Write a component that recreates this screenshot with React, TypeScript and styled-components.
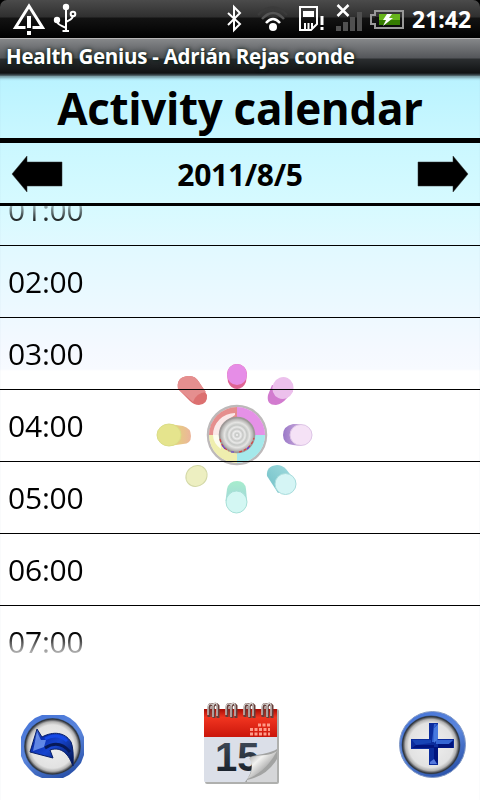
import React from "react";
import styled, { createGlobalStyle } from "styled-components";

const GlobalStyle = createGlobalStyle`
  * { box-sizing: border-box; }
  body { margin: 0; background: #000; font-family: "Open Sans", "Noto Sans", sans-serif; }
`;

const Screen = styled.div`
  width: 480px;
  height: 800px;
  display: flex;
  flex-direction: column;
  overflow: hidden;
  background: #000;
`;

const StatusBar = styled.div`
  height: 38px;
  display: flex;
  align-items: center;
  background: linear-gradient(#4b4b4b 0, #2f2f2f 17px, #131313 18px, #000 100%);
  border-radius: 7px 7px 0 0;
`;

const Clock = styled.span`
  margin-left: auto;
  width: 68px;
  font-size: 23px;
  line-height: 38px;
  font-weight: 700;
  letter-spacing: 0;
  color: #fff;
  white-space: nowrap;
`;

const TitleBar = styled.div`
  height: 38px;
  padding-left: 6px;
  border-top: 1px solid #b5b5b5;
  background: linear-gradient(#858789 0, #54565a 19px, #2b2e30 20px, #101213 34px, #3b4a50 36px, #60777d 37px);
  color: #fff;
  font-size: 20.5px;
  line-height: 34px;
  font-weight: 700;
  letter-spacing: -0.25px;
  white-space: nowrap;
  text-shadow: 0 0 5px #14241f, 1px 1px 3px #14241f;
`;

const Content = styled.main`
  position: relative;
  z-index: 0;
  flex: 1;
  display: flex;
  flex-direction: column;
  background: linear-gradient(#b9f3ff 0, #c9f7ff 60px, #d6faff 128px, #e2f9ff 175px, #ecf9ff 230px, #f5f9ff 275px, #f7faff 293px, #fff 295px);
  box-shadow: inset 0 4px 3px -2px #71929b;
`;

const Heading = styled.h1`
  margin: 0;
  height: 67px;
  border-bottom: 5px solid #000;
  font-size: 44px;
  line-height: 65px;
  letter-spacing: -0.35px;
  font-weight: 700;
  text-align: center;
  white-space: nowrap;
`;

const DateBar = styled.div`
  height: 63px;
  padding: 2px 11px 0;
  display: flex;
  align-items: center;
  justify-content: space-between;
  border-bottom: 3px solid #000;
`;

const DateText = styled.span`
  padding-top: 2px;
  font-size: 30px;
  line-height: 58px;
  letter-spacing: -0.3px;
  font-weight: 700;
`;

const HourList = styled.div`
  height: 455px;
  overflow: hidden;
  display: flex;
  flex-direction: column;
  justify-content: flex-start;
  mask-image: linear-gradient(transparent -8px, #000 18px, #000 427px, transparent 455px);
`;

const Hour = styled.div<{ $clipped?: boolean }>`
  flex: none;
  height: 72px;
  margin-top: ${(p) => (p.$clipped ? "-32px" : "0")};
  padding-left: 8px;
  border-bottom: 1px solid #000;
  font-size: 30px;
  line-height: 71px;
  letter-spacing: -0.2px;
  color: #000;
`;

const Footer = styled.footer`
  flex: 1;
  padding: 39px 13px 0 21px;
  display: flex;
  justify-content: space-between;
  align-items: flex-start;
`;

const RoundButton = styled.div<{ $drop: number }>`
  display: flex;
  padding-top: ${(p) => p.$drop}px;
`;

const Emblem = styled.svg`
  position: absolute;
  z-index: -1;
  left: 145px;
  top: 279px;
`;

const StatusIcons = () => (
  <svg width="406" height="38" viewBox="0 0 406 38" fill="none" stroke="#fff">
    <path d="M25.500 27.500H15.500L29 6L42.500 27.500H32.500" strokeWidth="3" />
    <path d="M29 16V28M29 31V35" strokeWidth="4" />
    <g strokeWidth="2">
      <path d="M66 7V31M57 20C57 25 61 25 66 28M73 15C73 20 69 20 66 22" />
      <circle cx="73" cy="14" r="2.300" />
      <path d="M62.500 31H69" />
    </g>
    <circle cx="66" cy="7" r="3.200" fill="#fff" stroke="none" />
    <circle cx="57" cy="20" r="3.200" fill="#fff" stroke="none" />
    <path d="M228 13L240 24L234 30V7L240 13L228 25" strokeWidth="2" />
    <path d="M258 15Q273 0 287 15" stroke="#3b3b3b" strokeWidth="2.500" />
    <path d="M262 19Q273 7 284 19" stroke="#555" strokeWidth="2.500" />
    <path d="M266 23Q273 15 280 23" strokeWidth="2.500" />
    <circle cx="273" cy="27" r="4" fill="#fff" stroke="none" />
    <path d="M300 7H317V24L311 30H300Z" strokeWidth="2" />
    <path d="M303 11H314V17H303Z" fill="#fff" stroke="none" />
    <path d="M305 23V29M308.500 23V29M312 23V28" strokeWidth="2" />
    <path d="M322 16V25M322 27V30" strokeWidth="3" />
    <path d="M337.500 5L348.500 16M348.500 5L337.500 16" strokeWidth="2.500" />
    <path d="M336 26H341V31H336ZM343 22H348V31H343ZM350 17H355V31H350ZM357 12H362V31H357Z" fill="#505050" stroke="none" />
    <path d="M375 11H403V28H375V24H371V15H375Z" stroke="#999" strokeWidth="2" />
    <path d="M379 14H400V25H379V22H375V17H379Z" fill="#67b51b" stroke="none" />
    <path d="M379 20H400V25H379Z" fill="#347c00" stroke="none" />
    <path d="M375 17H379V22H375Z" fill="#111" stroke="none" />
    <path d="M387 14H392L389 18H393L383 26L386 20H383Z" fill="#fff" stroke="none" />
  </svg>
);

const Arrow = ({ right }: { right?: boolean }) => (
  <svg width="52" height="36" viewBox="0 0 52 36">
    <g transform={right ? "translate(52 0) scale(-1 1)" : undefined}>
      <path d="M1 18L16 0V6H51V30H16V36Z" fill="#000" stroke="#333" strokeWidth=".5" />
    </g>
  </svg>
);

const PegEmblem = () => (
  <Emblem width="180" height="170" viewBox="0 0 180 170">
    <defs>
      <linearGradient id="mint" x1="0" y1="0" x2="0" y2="1">
        <stop stopColor="#a7edcd" /><stop offset="1" stopColor="#a2d7d8" />
      </linearGradient>
      <linearGradient id="gold"><stop stopColor="#e2dc72" /><stop offset="1" stopColor="#ecb59b" /></linearGradient>
      <linearGradient id="violet"><stop stopColor="#9a79c8" /><stop offset="1" stopColor="#cbaadb" /></linearGradient>
      <linearGradient id="aqua" x1="0" y1="1" x2="1" y2="0"><stop stopColor="#6fbfc6" /><stop offset="1" stopColor="#a4dde0" /></linearGradient>
      <radialGradient id="steel">
        <stop stopColor="#fff" /><stop offset=".1" stopColor="#c5c7c5" />
        <stop offset=".22" stopColor="#eeeeee" /><stop offset=".34" stopColor="#c6c7c5" />
        <stop offset=".46" stopColor="#eaeae9" /><stop offset=".57" stopColor="#c4c6c4" />
        <stop offset=".72" stopColor="#e5e5e3" /><stop offset="1" stopColor="#a09d9c" />
      </radialGradient>
    </defs>
    <path d="M82 19A10 10 0 0 1 102 19L101 27Q98 34 92 34T83 27Z" fill="#df6392" />
    <ellipse cx="92" cy="19.500" rx="10" ry="10.500" fill="#e68de7" />
    <path d="M33 34Q31 22 43 21Q50 20 54 27L62 40Q63 49 54 50Q49 50 45 46Z" fill="#dc7070" />
    <path d="M33 34Q31 22 43 21Q50 20 54 27L61 37Q51 38 48 47Z" fill="#e58f8f" />
    <path d="M127 30L123 40Q121 50 131 50Q137 49 142 43L148 36Z" fill="#d27bcf" />
    <ellipse cx="138" cy="33" rx="10.500" ry="11" transform="rotate(25 138 33)" fill="#ecc0ec" />
    <path d="M24 69L38 71Q46 73 46 81T38 89L24 91Z" fill="url(#gold)" />
    <ellipse cx="24" cy="80" rx="12" ry="11" fill="#e5e48d" stroke="#dadd87" />
    <path d="M156 69H148Q138 71 138 80T148 90L156 91Z" fill="url(#violet)" />
    <ellipse cx="156" cy="80" rx="11" ry="10.500" fill="#f5e2f6" stroke="#ddc5e6" />
    <path d="M122 121Q121 111 132 110Q137 110 141 114L151 127L133 138Z" fill="url(#aqua)" />
    <circle cx="140.500" cy="129" r="10.500" fill="#d5f5f5" stroke="#a8dcdc" />
    <path d="M80.500 146L82 134Q84 126 92 126T101 134L102 146Z" fill="url(#mint)" />
    <ellipse cx="91.500" cy="147" rx="10.500" ry="11" fill="#d3f7f3" stroke="#a6e0d7" />
    <ellipse cx="51.500" cy="121" rx="11" ry="10" transform="rotate(-40 51.500 121)" fill="#edefc1" stroke="#d3d8a7" />
    <circle cx="92" cy="80" r="29" fill="#fff" stroke="#bdb9ba" strokeWidth="2.500" />
    <path d="M92 80V52A28 28 0 0 0 64 80Z" fill="#e58e8d" />
    <path d="M92 80H120A28 28 0 0 0 92 52Z" fill="#e591e7" />
    <path d="M92 80V108A28 28 0 0 0 120 80Z" fill="#a5e9eb" />
    <path d="M92 80H64A28 28 0 0 0 92 108Z" fill="#efeeae" />
    <path d="M90 58A22 22 0 0 0 68 80Q68 88 76 94Q73 70 90 60Z" fill="#fff" opacity=".8" />
    <circle cx="92" cy="80" r="17.500" fill="url(#steel)" stroke="#9e9897" strokeWidth="1.500" />
    <path d="M75 84Q77 93 84 96M94 97Q106 94 109 83" fill="none" stroke="#d93d3d" strokeWidth="1.200" strokeDasharray="3 2" />
    <path d="M77 90L80 94M86 97H89M102 94L104 92" stroke="#6938d5" strokeWidth="1.200" />
  </Emblem>
);

const BlueDefs = ({ name }: { name: string }) => (
  <defs>
    <linearGradient id={name} x1=".2" y1="0" x2=".7" y2="1">
      <stop stopColor="#4775d8" /><stop offset=".5" stopColor="#5b86dc" /><stop offset="1" stopColor="#2850a8" />
    </linearGradient>
    <radialGradient id={name + "face"}>
      <stop stopColor="#efefef" /><stop offset=".76" stopColor="#e2e2e2" />
      <stop offset=".87" stopColor="#b2b2b2" /><stop offset=".96" stopColor="#30343c" /><stop offset="1" stopColor="#34527f" />
    </radialGradient>
    <linearGradient id={name + "ink"} x1="0" y1="0" x2="1" y2="1">
      <stop stopColor="#5a86e7" /><stop offset=".25" stopColor="#0b2eae" />
      <stop offset=".5" stopColor="#1745cf" /><stop offset="1" stopColor="#001144" />
    </linearGradient>
  </defs>
);

const BackButton = () => (
  <svg width="64" height="80" viewBox="0 0 64 80">
    <BlueDefs name="back" />
    <path d="M21 9H43L49 12L55 17L60 24L63 31V49L60 57L54 64L48 69L42 72H21L14 69L8 63L3 57L0 50V31L3 24L8 17L14 12Z" fill="url(#back)" />
    <circle cx="31.500" cy="40.500" r="28.500" fill="url(#backface)" />
    <path d="M16 23L21 31C32 25 44 26 50 36Q53 43 52 60C48 49 41 40 29 44L32 52L9 46Z" fill="url(#backink)" stroke="#071e68" strokeWidth="1" />
    <path d="M16 26L20 34L25 34L23 41L12 45Z" fill="#8db3ff" opacity=".65" />
    <path d="M24 33Q36 26 46 35" fill="none" stroke="#1649e5" strokeWidth="3" />
    <path d="M24 42Q38 33 49 46" fill="none" stroke="#071958" strokeWidth="3" />
  </svg>
);

const CalendarButton = () => (
  <svg width="78" height="90" viewBox="2 0 78 90">
    <defs>
      <linearGradient id="red" x1="0" y1="0" x2="0" y2="1"><stop stopColor="#a60c04" /><stop offset=".3" stopColor="#f13520" /><stop offset="1" stopColor="#ca160b" /></linearGradient>
      <linearGradient id="number" x1="0" y1="0" x2="0" y2="1"><stop stopColor="#46515f" /><stop offset="1" stopColor="#111924" /></linearGradient>
      <linearGradient id="curl" x1="0" y1="0" x2="1" y2="1"><stop stopColor="#8c8c8c" /><stop offset=".35" stopColor="#f2f2f0" /><stop offset=".65" stopColor="#aaa" /><stop offset="1" stopColor="#555" /></linearGradient>
    </defs>
    <rect x="4" y="9" width="74" height="75" rx="2" fill="#8d8e8b" opacity=".7" />
    <rect x="3" y="9" width="73" height="73" rx="1" fill="#dbdfe8" />
    <rect x="3" y="9" width="73" height="28" fill="url(#red)" />
    <text x="14" y="71" fontFamily="Liberation Sans" fontSize="40" fontWeight="700" fill="url(#number)">15</text>
    <path d="M76 49C68 54 57 54 49 57Q54 70 44 82H76Z" fill="#a2a3a2" />
    <path d="M76 51C68 57 57 54 48 58Q55 69 46 79Q65 72 76 51Z" fill="url(#curl)" />
    <path d="M76 59Q66 76 46 80V82H76Z" fill="#d5d6d8" />
    <path d="M57 25H69M49 29.500H69M49 34H69" stroke="#ff9b89" strokeWidth="3" strokeDasharray="3 1.500" />
    {[12, 30, 48, 66].map((x) => (
      <g key={x} fill="none">
        <path d={`M${x - 4} 17V8Q${x - 4} 3 ${x} 5L${x + 1} 18M${x} 17V7Q${x + 2} 2 ${x + 5} 6V18`} stroke="#663e3a" strokeWidth="3" />
        <path d={`M${x - 5} 15V7Q${x - 4} 2 ${x} 5V17M${x} 16V6Q${x + 2} 1 ${x + 4} 5V16`} stroke="#d3d1ce" strokeWidth="1.300" />
      </g>
    ))}
  </svg>
);

const AddButton = () => (
  <svg width="69" height="80" viewBox="0 0 69 80">
    <BlueDefs name="add" />
    <circle cx="34.500" cy="38.500" r="33" fill="url(#add)" stroke="#8299c5" />
    <circle cx="33" cy="39" r="29.500" fill="url(#addface)" />
    <path d="M31 17H40V33H56V42H40V59H31V43H13V33H31Z" fill="#0b2c9c" />
    <path d="M36 18H39L36 22V36H34ZM38 34H55L51 38H38Z" fill="#3465d4" />
    <path d="M14 34H33V37L18 39Z" fill="#1744b5" />
    <path d="M36 22L40 18V33L36 37Z" fill="#4779df" />
    <path d="M18 39H36V42H14ZM51 38L55 35V42H40V38ZM36 41H40V58L36 54Z" fill="#00147e" />
    <path d="M32 56L36 53L39 58H32Z" fill="#5679dc" />
  </svg>
);

const hours = ["01:00", "02:00", "03:00", "04:00", "05:00", "06:00", "07:00"];

export default function App() {
  return (
    <>
      <GlobalStyle />
      <Screen>
        <StatusBar><StatusIcons /><Clock>21:42</Clock></StatusBar>
        <TitleBar>Health Genius - Adrián Rejas conde</TitleBar>
        <Content>
          <PegEmblem />
          <Heading>Activity calendar</Heading>
          <DateBar><Arrow /><DateText>2011/8/5</DateText><Arrow right /></DateBar>
          <HourList>
            {hours.map((hour, index) => <Hour key={hour} $clipped={index === 0}>{hour}</Hour>)}
          </HourList>
          <Footer>
            <RoundButton $drop={6}><BackButton /></RoundButton>
            <CalendarButton />
            <RoundButton $drop={6}><AddButton /></RoundButton>
          </Footer>
        </Content>
      </Screen>
    </>
  );
}
